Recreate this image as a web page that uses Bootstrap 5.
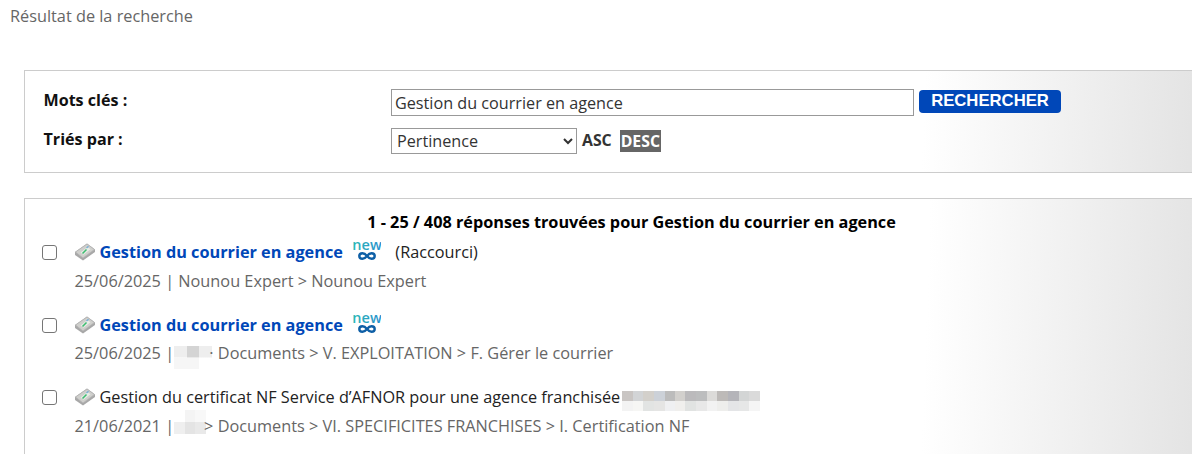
<!DOCTYPE html>
<html lang="fr">
<head>
<meta charset="utf-8">
<title>Résultat de la recherche</title>
<link href="https://cdn.jsdelivr.net/npm/bootstrap@5.3.0/dist/css/bootstrap.min.css" rel="stylesheet">
<style>
html,body{height:454px;overflow:hidden}
body{font-family:"Open Sans",sans-serif;font-size:16.25px;color:#212529;background:#fff}
.page-title{font-size:16.3px;line-height:20px;color:#666;padding:6px 0 0 10px;margin:0 0 44px}
.panel-box{border:1px solid #ccc;margin:0 -47px 25px 24px;background:linear-gradient(92deg,#fff 74%,#dfdfdf 100%)}
.search-box{height:103px;padding:17px 0 0 18.5px}
.result-box{height:300px;padding:13px 0 0 17px}
.form-line{display:flex;align-items:center}
.line-one{height:28px}
.line-two{height:28px;margin-top:11px}
.field-label{width:347.5px;font-weight:700;font-size:16.1px;color:#111;padding-bottom:4px}
.kw-input{width:523px;height:27px;border:1px solid #999;padding:1px 3px 0;font:16.2px "Open Sans",sans-serif;color:#333;background:#fff;outline:0}
.go-btn{margin-left:5px;width:142px;height:23px;padding:0;border:0;border-radius:4px;background:#0047b8;color:#fff;font:700 16.7px "Liberation Sans",sans-serif;transform:translateY(-1px)}
.sort-select{width:186px;height:26px;border:1px solid #999;padding:0 1px;font:16.2px "Open Sans",sans-serif;color:#333;background:#fff}
.order-link{font-weight:700;font-size:15.8px;color:#333;margin-left:5px}
.order-on{background:#666;color:#fff;margin-left:8px;padding:0 1px;line-height:22px}
.count-line{font-weight:700;font-size:16.25px;color:#000;text-align:center;line-height:20px;margin-left:-17px}
.hit-line{display:flex;align-items:center;height:26px;color:#222}
.first-hit{margin-top:7px}
.hit-check{width:15px;height:15px;margin:0 18px 0 0;flex:none;appearance:none;border:1.5px solid #767676;border-radius:3px;background:#fff}
.hit-link{color:#0047b8;font-weight:700;text-decoration:none}
.hit-icon{margin-right:4.5px;flex:none}
.new-icon{margin:-3px 14px 0 10.500px;flex:none}
.hit-meta{color:#666;font-size:16.3px;line-height:20px;padding-left:32.5px;height:47px;padding-top:6px}
.tight-meta{height:46px;padding-top:5px}
.meta-blur{display:inline-block;vertical-align:top}
.blur-two{width:38px;height:23px;margin:3px -7px 0 0;background:
 linear-gradient(90deg,#eee 0 33%,#d4d4d4 33% 66%,#eee 66% 100%) 0 0/100% 50% no-repeat,
 linear-gradient(90deg,#f6f6f6 0 66%,#fff 66%) 0 100%/100% 50% no-repeat}
.blur-three{width:32px;height:24px;margin:-6px -2px 0 0;background:
 linear-gradient(90deg,#fff 0 33%,#f4f4f4 33% 66%,#f8f8f8 66%) 0 0/100% 50% no-repeat,
 linear-gradient(90deg,#efefef 0 33%,#e4e4e4 33% 66%,#e9e9e9 66%) 0 100%/100% 50% no-repeat}
.blur-long{flex:none;width:138px;height:20px;margin:8px 0 0 2px;background:
 linear-gradient(90deg,#c9c5c3 0 8%,#d2d4d6 8% 15.4%,#d3d0cb 15.4% 23%,#ccd1d8 23% 30.8%,#bcbcbc 30.8% 38.4%,#d2d0cd 38.4% 46%,#bbbabc 46% 53.8%,#bcbdbe 53.8% 61.5%,#dcdbd9 61.5% 69.2%,#bdbab8 69.2% 77%,#b4b4b9 77% 84.6%,#d3d5d5 84.6% 92.3%,#dadada 92.3%) 0 0/100% 50% no-repeat,
 linear-gradient(90deg,#f3f3f3 0 8%,#f6f6f4 8% 15.4%,#e2e4e3 15.4% 23%,#e5e5e4 23% 30.8%,#eff0f2 30.8% 38.4%,#f0efed 38.4% 46%,#e1e3e2 46% 53.8%,#e8e8e8 53.8% 61.5%,#f2f2f2 61.5% 69.2%,#eeeeec 69.2% 77%,#e4e5e7 77% 84.6%,#e6e7e7 84.6% 92.3%,#f5f5f5 92.3%) 0 100%/100% 50% no-repeat}
</style>
</head>
<body>
<svg width="0" height="0" class="d-block" aria-hidden="true">
<defs>
<linearGradient id="newfill" x1="0" x2="1" y1="0" y2="0"><stop offset="0" stop-color="#2ab9b4"/><stop offset="1" stop-color="#2b8fd0"/></linearGradient>
<symbol id="book" viewBox="0 0 20 18">
<path d="M0 9 12 .5l8 6v2.500L8 17.500 0 12z" fill="#a8a8a8"/>
<path d="M.5 9 12 1l7.500 5.500L8 15z" fill="#cfcfcc" stroke="#b4b4b4" stroke-width=".8"/>
<path d="M5.500 9.500 12.500 4l3 2.300-7 5.500z" fill="#e8ece6"/>
<path d="M7.500 10.500 11.500 6.500" stroke="#3dbb70" stroke-width="1.600"/>
<path d="M11.500 5 13.500 3.300" stroke="#78aed6" stroke-width="1.400"/>
</symbol>
<symbol id="newmark" viewBox="0 0 28 22">
<text x="14" y="10" text-anchor="middle" font-family="Open Sans,sans-serif" font-size="14.500" font-weight="600" fill="url(#newfill)">new</text>
<path d="M14 16c-1.600-2-3-2.800-4.500-2.800-1.800 0-3.200 1.200-3.200 2.800s1.400 2.800 3.200 2.800c1.500 0 2.900-.8 4.500-2.800s3-2.800 4.500-2.800c1.800 0 3.200 1.200 3.200 2.800s-1.400 2.800-3.200 2.800c-1.500 0-2.900-.8-4.500-2.800z" fill="none" stroke="#0e5fa6" stroke-width="2.400"/>
</symbol>
</defs>
</svg>
<p class="page-title">Résultat de la recherche</p>
<form class="panel-box search-box">
<div class="form-line line-one">
<span class="field-label">Mots clés :</span>
<input class="kw-input" type="text" value="Gestion du courrier en agence" aria-label="Mots clés">
<button class="go-btn" type="button">RECHERCHER</button>
</div>
<div class="form-line line-two">
<span class="field-label">Triés par :</span>
<select class="sort-select" aria-label="Triés par"><option>Pertinence</option></select>
<span class="order-link">ASC</span>
<span class="order-link order-on">DESC</span>
</div>
</form>
<section class="panel-box result-box">
<div class="count-line">1 - 25 / 408 réponses trouvées pour Gestion du courrier en agence</div>
<div class="hit-line first-hit"><input class="hit-check" type="checkbox" aria-label="Sélectionner"><svg class="hit-icon" width="20" height="18"><use href="#book"/></svg><a class="hit-link" href="#">Gestion du courrier en agence</a><svg class="new-icon" width="28" height="22"><use href="#newmark"/></svg><span>(Raccourci)</span></div>
<div class="hit-meta">25/06/2025 | Nounou Expert &gt; Nounou Expert</div>
<div class="hit-line"><input class="hit-check" type="checkbox" aria-label="Sélectionner"><svg class="hit-icon" width="20" height="18"><use href="#book"/></svg><a class="hit-link" href="#">Gestion du courrier en agence</a><svg class="new-icon" width="28" height="22"><use href="#newmark"/></svg></div>
<div class="hit-meta tight-meta">25/06/2025 |<span class="meta-blur blur-two"></span> · Documents &gt; V. EXPLOITATION &gt; F. Gérer le courrier</div>
<div class="hit-line"><input class="hit-check" type="checkbox" aria-label="Sélectionner"><svg class="hit-icon" width="20" height="18"><use href="#book"/></svg><span>Gestion du certificat NF Service d’AFNOR pour une agence franchisée</span><span class="blur-long"></span></div>
<div class="hit-meta">21/06/2021 |<span class="meta-blur blur-three"></span>&gt; Documents &gt; VI. SPECIFICITES FRANCHISES &gt; I. Certification NF</div>
</section>
<script src="https://cdn.jsdelivr.net/npm/bootstrap@5.3.0/dist/js/bootstrap.bundle.min.js"></script>
</body>
</html>
